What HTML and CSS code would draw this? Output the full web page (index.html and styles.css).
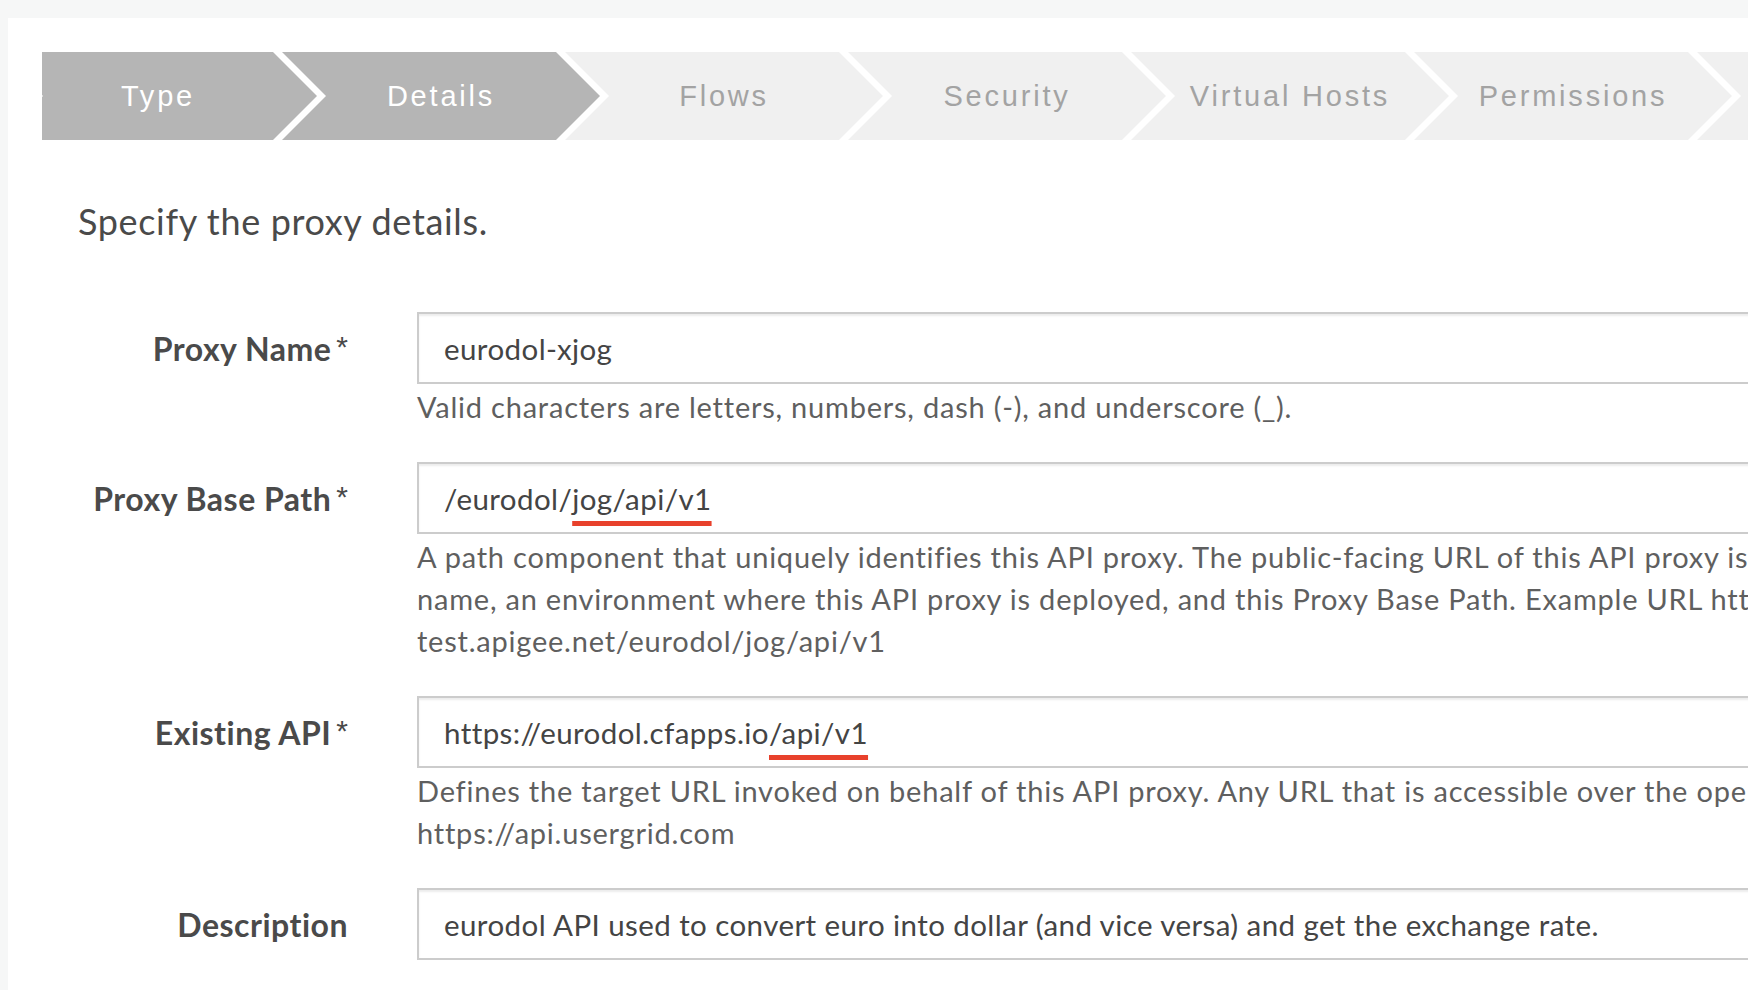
FILE: index.html
```html
<!DOCTYPE html>
<html lang="en">
<head>
<meta charset="utf-8">
<title>Proxy details</title>
<link rel="stylesheet" href="styles.css">
</head>
<body>
<div class="panel">
  <div class="steps">
    <div class="step done">Type</div>
    <div class="step done">Details</div>
    <div class="step">Flows</div>
    <div class="step">Security</div>
    <div class="step">Virtual Hosts</div>
    <div class="step">Permissions</div>
    <div class="step"></div>
  </div>

  <p class="intro">Specify the proxy details.</p>

  <div class="form">
    <div class="label"><span>Proxy Name</span><span class="req">*</span></div>
    <div class="control">
      <div class="field">eurodol-xjog</div>
      <div class="help"><span class="line">Valid characters are letters, numbers, dash (-), and underscore (_).</span></div>
    </div>

    <div class="label"><span>Proxy Base Path</span><span class="req">*</span></div>
    <div class="control">
      <div class="field">/eurodol/<span class="mark">jog/api/v1</span></div>
      <div class="help">
        <span class="line">A path component that uniquely identifies this API proxy. The public-facing URL of this API proxy is comprised of your organization</span>
        <span class="line">name, an environment where this API proxy is deployed, and this Proxy Base Path. Example URL https://myorg-</span>
        <span class="line">test.apigee.net/eurodol/jog/api/v1</span>
      </div>
    </div>

    <div class="label"><span>Existing API</span><span class="req">*</span></div>
    <div class="control">
      <div class="field">https://eurodol.cfapps.io<span class="mark">/api/v1</span></div>
      <div class="help">
        <span class="line">Defines the target URL invoked on behalf of this API proxy. Any URL that is accessible over the open Internet can be used. Example:</span>
        <span class="line">https://api.usergrid.com</span>
      </div>
    </div>

    <div class="label"><span>Description</span></div>
    <div class="control">
      <div class="field">eurodol API used to convert euro into dollar (and vice versa) and get the exchange rate.</div>
    </div>
  </div>
</div>
</body>
</html>
```

FILE: styles.css
```css
html, body {
  margin: 0;
  padding: 0;
}
body {
  background: #f6f7f7;
  overflow: hidden;
  font-family: Lato, "Open Sans", sans-serif;
  color: #4a4a4a;
}
.panel {
  margin: 18px 0 0 8px;
  padding: 34px 0 60px 34px;
  width: 2200px;
  background: #ffffff;
}
.steps {
  display: flex;
  height: 88px;
  overflow: hidden;
}
.step {
  flex: none;
  width: 318px;
  height: 88px;
  margin-right: -35px;
  display: flex;
  align-items: center;
  justify-content: center;
  background: #f0f0f0;
  color: #a3a3a3;
  font-family: "Liberation Sans", Arial, sans-serif;
  font-size: 29px;
  letter-spacing: 2.8px;
  clip-path: polygon(0 0, 274px 0, 318px 50%, 274px 100%, 0 100%, 44px 50%);
}
.step:first-child {
  margin-left: -43px;
}
.step.done {
  background: #b5b5b5;
  color: #ffffff;
}
.intro {
  margin: 61px 0 0 36px;
  font-size: 36px;
  line-height: 41px;
  letter-spacing: 0.65px;
  color: #4a4a4a;
}
.form {
  margin-top: 70px;
  display: grid;
  grid-template-columns: 306px 1fr;
  column-gap: 69px;
  row-gap: 34px;
  align-items: start;
}
.label {
  height: 72px;
  display: flex;
  align-items: center;
  justify-content: flex-end;
  font-weight: 700;
  font-size: 32px;
  letter-spacing: 0.5px;
  color: #4a4a4a;
  white-space: nowrap;
}
.req {
  align-self: flex-start;
  margin: 20px 0 0 5px;
  font-family: "Liberation Sans", Arial, sans-serif;
  font-weight: 400;
  font-size: 30px;
  line-height: 1;
  letter-spacing: 0;
  color: #4a4a4a;
}
.field {
  box-sizing: border-box;
  height: 72px;
  width: 1700px;
  border: 2px solid #cccccc;
  box-shadow: inset 0 2px 2px rgba(0, 0, 0, 0.075);
  padding: 0 25px;
  display: flex;
  align-items: center;
  font-size: 29.5px;
  letter-spacing: 0.42px;
  color: #444444;
  white-space: nowrap;
}
.mark {
  text-decoration: underline;
  text-decoration-color: #e8412c;
  text-decoration-thickness: 4.5px;
  text-underline-offset: 11px;
  text-decoration-skip-ink: none;
}
.help {
  margin-top: 2px;
  font-size: 29px;
  line-height: 42px;
  letter-spacing: 0.78px;
  color: #5f5f5f;
}
.help .line {
  display: block;
  white-space: nowrap;
}
```
